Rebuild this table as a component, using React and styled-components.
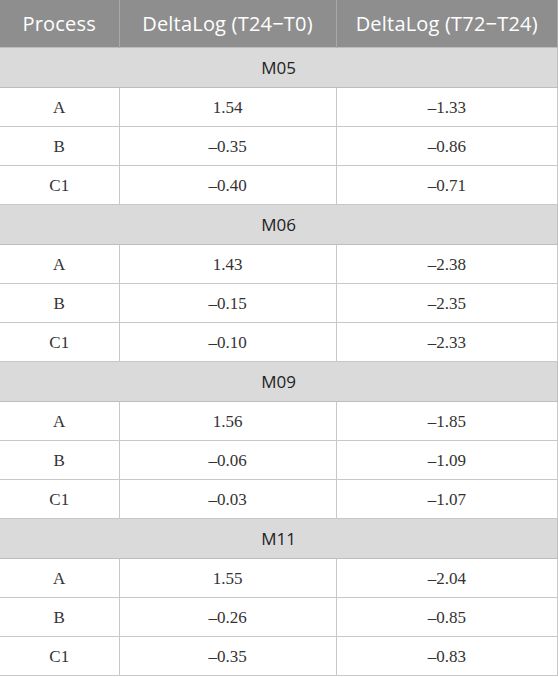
import styled, { createGlobalStyle } from 'styled-components';

const GlobalStyle = createGlobalStyle`
    body {
        margin: 0;
        background: #fff;
    }
`;

const groups = [
    { name: 'M05', rows: [['A', '1.54', '\u20131.33'], ['B', '\u20130.35', '\u20130.86'], ['C1', '\u20130.40', '\u20130.71']] },
    { name: 'M06', rows: [['A', '1.43', '\u20132.38'], ['B', '\u20130.15', '\u20132.35'], ['C1', '\u20130.10', '\u20132.33']] },
    { name: 'M09', rows: [['A', '1.56', '\u20131.85'], ['B', '\u20130.06', '\u20131.09'], ['C1', '\u20130.03', '\u20131.07']] },
    { name: 'M11', rows: [['A', '1.55', '\u20132.04'], ['B', '\u20130.26', '\u20130.85'], ['C1', '\u20130.35', '\u20130.83']] },
];

const App = () => {
    return (
        <>
            <GlobalStyle />
            <Table>
                <colgroup>
                    <col style={{ width: 119 }} />
                    <col style={{ width: 217 }} />
                    <col />
                </colgroup>
                <thead>
                    <tr>
                        <Th>Process</Th>
                        <Th>DeltaLog (T24{'\u2212'}T0)</Th>
                        <Th>DeltaLog (T72{'\u2212'}T24)</Th>
                    </tr>
                </thead>
                <tbody>
                    {groups.map((g) => (
                        <Group key={g.name} group={g} />
                    ))}
                </tbody>
            </Table>
        </>
    );
};

const Group = ({ group }) => (
    <>
        <tr>
            <GroupCell colSpan={3}>{group.name}</GroupCell>
        </tr>
        {group.rows.map((r) => (
            <tr key={r[0]}>
                {r.map((v, i) => (
                    <Td key={i}>{v}</Td>
                ))}
            </tr>
        ))}
    </>
);

export default App;

const Table = styled.table`
    width: 558px;
    border-collapse: collapse;
    table-layout: fixed;
`;

const Th = styled.th`
    height: 47px;
    padding: 0;
    background: #8e8e8e;
    color: #fff;
    font-family: 'Open Sans', sans-serif;
    font-size: 20px;
    font-weight: 400;
    letter-spacing: 0.2px;
    text-align: center;
    white-space: nowrap;
    border-left: 1px solid #a9a9a9;
    border-right: 1px solid #a9a9a9;
    &:first-child {
        border-left: none;
    }
`;

const GroupCell = styled.td`
    height: 39px;
    padding: 0;
    background: #dadada;
    color: #222;
    font-family: 'Open Sans', sans-serif;
    font-size: 17px;
    text-align: center;
    border: 1px solid #bdbdbd;
    border-left: none;
`;

const Td = styled.td`
    box-sizing: border-box;
    height: 39px;
    padding: 2px 0 0;
    color: #333;
    font-family: 'Liberation Serif', serif;
    font-size: 17px;
    text-align: center;
    border: 1px solid #c8c8c8;
    &:first-child {
        border-left: none;
    }
`;
